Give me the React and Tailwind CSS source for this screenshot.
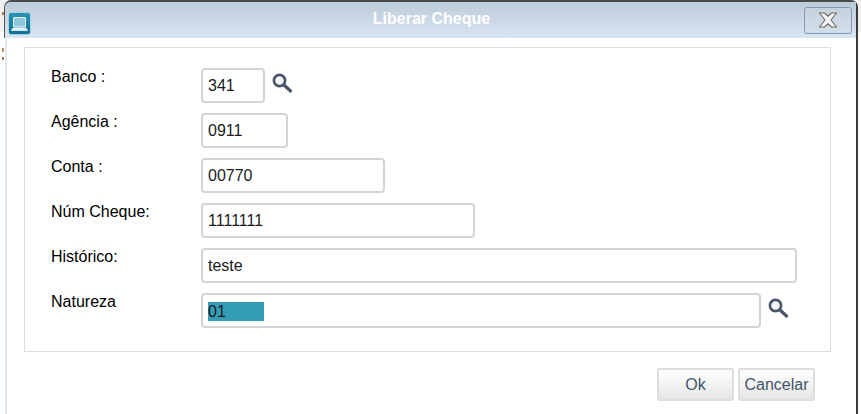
function LensIcon() {
  return (
    <svg width="22" height="22" viewBox="0 0 22 22" fill="none">
      <circle cx="8.5" cy="8.5" r="5.6" stroke="#4a5568" strokeWidth="2.6" fill="#f4f6f8" />
      <path d="M13 13l6.5 6" stroke="#4a5568" strokeWidth="3.2" strokeLinecap="round" />
    </svg>
  )
}

function Field({ label, value, width, lens, selected }) {
  return (
    <div className="flex h-[35px] items-start">
      <label className="w-[150px] text-[16px] leading-[18px] text-black">{label}</label>
      <div className={`flex h-[35px] ${width} items-center rounded-[4px] border-2 border-[#d4d4d4] bg-white pl-[5px] text-[16px] text-[#1a1a1a]`}>
        {selected ? <span className="mt-[1px] block h-[19px] w-[56px] bg-[#369db6] leading-[19px]">{value}</span> : value}
      </div>
      {lens && <span className={`${lens} mt-[4px]`}><LensIcon /></span>}
    </div>
  )
}

export default function App() {
  return (
    <div className="relative h-[414px] w-[861px] overflow-hidden bg-white pl-[4px] font-['Liberation_Sans',Arial,sans-serif]">
      <span className="absolute top-0 left-0 h-[32px] w-[4px] bg-[#f0f0f0]" />
      <span className="absolute top-0 right-0 h-[32px] w-[3px] bg-[#f0f0f0]" />
      <span className="absolute top-[12px] left-[2px] h-[3px] w-[2px] bg-[#a8794e]" />
      <span className="absolute top-[48px] left-[2px] h-[4px] w-[2px] bg-[#b8906a]" />
      <span className="absolute top-[57px] left-[2px] h-[3px] w-[2px] bg-[#a8794e]" />
      <div className="relative h-[414px] w-[854px] rounded-t-[7px] border-t-2 border-r-2 border-t-[#4a4a4a] border-r-[#3a3a3a] bg-white">
        <div className="flex h-[36px] items-center justify-between rounded-tl-[6px] border-l border-l-[#555555] bg-gradient-to-b from-[#bdccd9] to-[#d8e5f2] pr-[4px] pl-[3px]">
          <div className="mt-[10px] flex h-[23px] w-[23px] shrink-0 self-start items-center justify-center rounded-[3px] border border-[#a5d0e2] bg-gradient-to-b from-[#2a93b5] to-[#0f6f92]">
            <svg width="19" height="16" viewBox="0 0 19 16" fill="none">
              <rect x="3.5" y="1.5" width="12" height="9.5" rx="0.5" fill="#8fc6da" stroke="#e6f3f8" strokeWidth="1" />
              <path d="M1.5 14.5h16l-1.5-2.5H3z" fill="#e6f3f8" stroke="#e6f3f8" strokeWidth="0.8" />
            </svg>
          </div>
          <h1 className="-mt-[2px] flex-1 pl-[28px] text-center text-[16px] font-bold text-white">Liberar Cheque</h1>
          <button className="flex h-[27px] w-[48px] items-center justify-center rounded-[3px] border border-[#8299b5] bg-gradient-to-b from-[#c5d3df] to-[#d2deea]">
            <svg width="22" height="18" viewBox="0 0 22 18">
              <path d="M2.5 2h5L11 5.2 14.5 2h5l-5.5 7 5.5 7h-5L11 12.8 7.5 16h-5L8 9z" fill="#f4f4f4" stroke="#6e6e6e" strokeWidth="1.2" strokeLinejoin="round" />
            </svg>
          </button>
        </div>
        <div className="ml-[1px] border-l-2 border-l-[#dfe8f2] pt-[9px] pl-[17px]">
          <div className="flex h-[305px] w-[807px] flex-col gap-[10px] border border-[#dcdcdc] pt-[20px] pl-[26px]">
            <Field label="Banco :" value="341" width="w-[64px]" lens="ml-[6px]" />
            <Field label="Agência :" value="0911" width="w-[87px]" />
            <Field label="Conta :" value="00770" width="w-[184px]" />
            <Field label="Núm Cheque:" value="1111111" width="w-[274px]" />
            <Field label="Histórico:" value="teste" width="w-[596px]" />
            <Field label="Natureza" value="01" width="w-[560px]" lens="ml-[6px]" selected />
          </div>
          <div className="h-[63px] pt-[16px] pl-[633px]">
            <div className="flex gap-[4px]">
              <button className="h-[33px] w-[77px] rounded-[3px] border-2 border-[#dddddd] bg-gradient-to-b from-[#ffffff] to-[#e6e6e6] p-0 text-[16px] text-[#44546a]">Ok</button>
              <button className="h-[33px] w-[77px] rounded-[3px] border-2 border-[#dddddd] bg-gradient-to-b from-[#ffffff] to-[#e6e6e6] p-0 text-[16px] text-[#44546a]">Cancelar</button>
            </div>
          </div>
        </div>
      </div>
    </div>
  )
}
